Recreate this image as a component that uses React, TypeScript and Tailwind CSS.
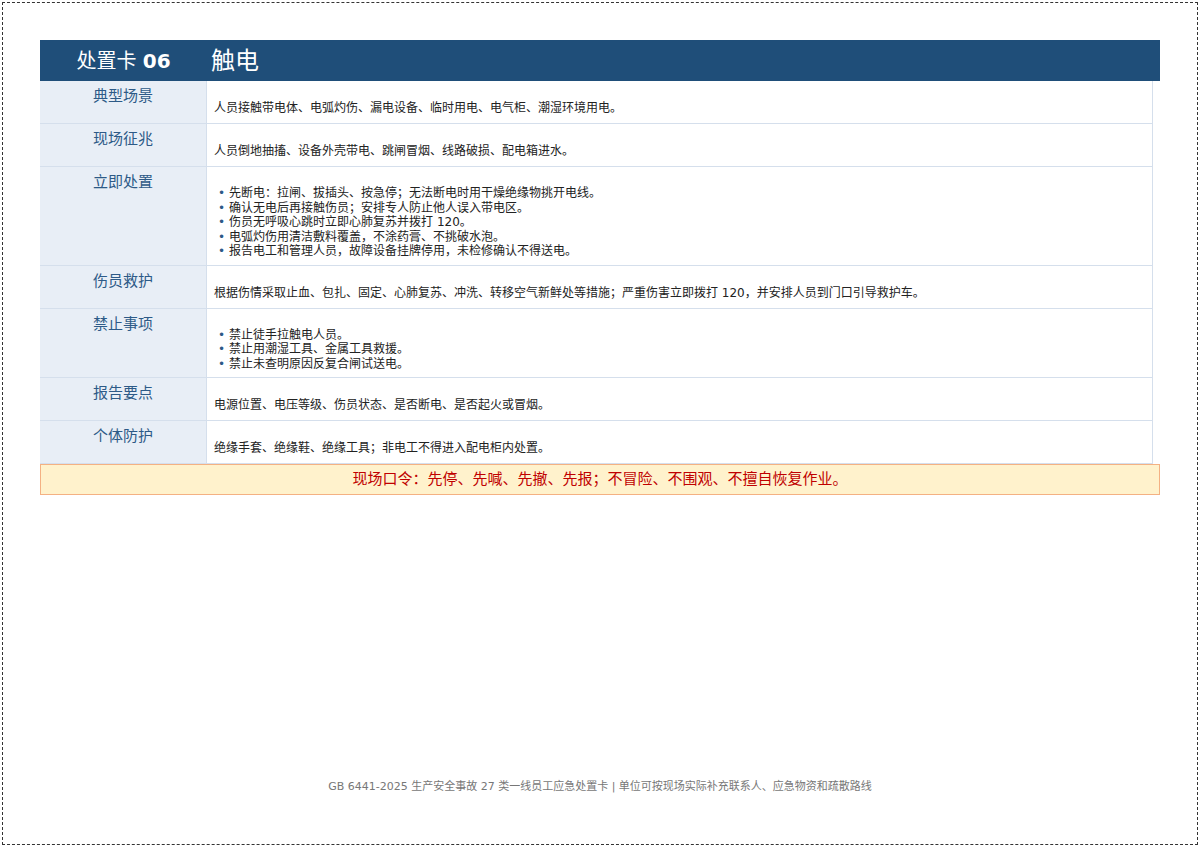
const F = { fontFamily: '"DejaVu Sans","Noto Sans CJK SC",sans-serif' };

const rows: { label: string; text?: string; items?: string[] }[] = [
  { label: "典型场景", text: "人员接触带电体、电弧灼伤、漏电设备、临时用电、电气柜、潮湿环境用电。" },
  { label: "现场征兆", text: "人员倒地抽搐、设备外壳带电、跳闸冒烟、线路破损、配电箱进水。" },
  {
    label: "立即处置",
    items: [
      "先断电：拉闸、拔插头、按急停；无法断电时用干燥绝缘物挑开电线。",
      "确认无电后再接触伤员；安排专人防止他人误入带电区。",
      "伤员无呼吸心跳时立即心肺复苏并拨打 120。",
      "电弧灼伤用清洁敷料覆盖，不涂药膏、不挑破水泡。",
      "报告电工和管理人员，故障设备挂牌停用，未检修确认不得送电。",
    ],
  },
  { label: "伤员救护", text: "根据伤情采取止血、包扎、固定、心肺复苏、冲洗、转移空气新鲜处等措施；严重伤害立即拨打 120，并安排人员到门口引导救护车。" },
  { label: "禁止事项", items: ["禁止徒手拉触电人员。", "禁止用潮湿工具、金属工具救援。", "禁止未查明原因反复合闸试送电。"] },
  { label: "报告要点", text: "电源位置、电压等级、伤员状态、是否断电、是否起火或冒烟。" },
  { label: "个体防护", text: "绝缘手套、绝缘鞋、绝缘工具；非电工不得进入配电柜内处置。" },
];

export default function App() {
  return (
    <div style={F} className="w-[1200px] h-[847px] bg-white p-[2px]">
      <div className="h-full border border-dashed border-[#333] flex flex-col px-[37px] pt-[37px]">
        <div className="flex h-[41px] bg-[#1f4e79] text-white items-center">
          <div className="w-[167px] text-center text-[20px]">处置卡 <b>06</b></div>
          <div className="pl-[4px] text-[24px]">触电</div>
        </div>
        <div className="mr-[7px] border-r border-[#d5dfec]">
          {rows.map((r) => (
            <div key={r.label} className="flex border-b border-[#d5dfec]">
              <div className="w-[167px] shrink-0 bg-[#e8eef6] text-center text-[15px] text-[#2d5a87] pt-[4px] border-r border-[#d5dfec]">
                {r.label}
              </div>
              <div className="flex-1 pl-[7px] pt-[19px] pb-[6px] text-[12px] leading-[15px] text-[#222]">
                {r.text && <div className="pt-[1px] pb-[1px]">{r.text}</div>}
                {r.items && (
                  <ul className="pl-[4px]">
                    {r.items.map((t) => (
                      <li key={t} className="leading-[14.5px]">
                        <span className="text-[#2d5a87] mr-[4px]">•</span>
                        {t}
                      </li>
                    ))}
                  </ul>
                )}
              </div>
            </div>
          ))}
        </div>
        <div className="h-[31px] bg-[#fff2cc] border border-[#f4b183] text-[#c00000] text-[15px] flex items-center justify-center">
          现场口令：先停、先喊、先撤、先报；不冒险、不围观、不擅自恢复作业。
        </div>
        <div className="flex-1" />
        <div className="text-center text-[11px] text-[#777] pb-[49px]">
          GB 6441-2025 生产安全事故 27 类一线员工应急处置卡 | 单位可按现场实际补充联系人、应急物资和疏散路线
        </div>
      </div>
    </div>
  );
}
